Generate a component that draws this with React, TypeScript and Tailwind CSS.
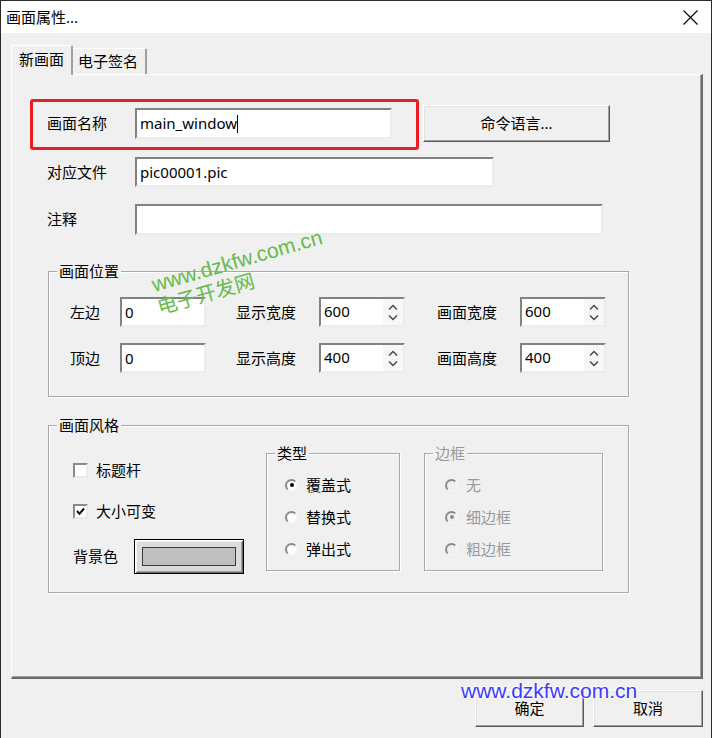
import React from "react";

function Edit({ w, h, value, caret }: { w: string; h: string; value?: string; caret?: boolean }) {
  return (
    <div
      className={`${w} ${h} bg-white border-2 border-t-[#828282] border-l-[#828282] border-r-[#ececec] border-b-[#ececec] flex items-center pl-[3px] text-[15px] text-black leading-none`}
    >
      <span>{value}</span>
      {caret ? <span className="w-px h-[18px] bg-black" /> : null}
    </div>
  );
}

function Spin({ value }: { value: string }) {
  return (
    <div className="w-[86px] h-[30px] bg-white border-2 border-t-[#828282] border-l-[#828282] border-r-[#ececec] border-b-[#ececec] flex text-[15px] text-black">
      <div className="flex-1 flex items-center pl-[3px] leading-none pb-[2px]">{value}</div>
      <div className="w-[20px] h-full bg-[#f7f7f7] flex flex-col items-center justify-center gap-[5px]">
        <svg width="10" height="6" viewBox="0 0 10 6">
          <path d="M1 5.5 L5 1.5 L9 5.5" fill="none" stroke="#444" strokeWidth="1.4" />
        </svg>
        <svg width="10" height="6" viewBox="0 0 10 6">
          <path d="M1 0.5 L5 4.5 L9 0.5" fill="none" stroke="#444" strokeWidth="1.4" />
        </svg>
      </div>
    </div>
  );
}

function Button({ w, h, children }: { w: string; h: string; children: React.ReactNode }) {
  return (
    <div
      className={`${w} ${h} bg-[#f0f0f0] border border-t-white border-l-white border-r-[#5a5a5a] border-b-[#5a5a5a] shadow-[inset_-1px_-1px_0_#a0a0a0,inset_1px_1px_0_#e3e3e3] flex items-center justify-center text-[15px] text-black`}
    >
      {children}
    </div>
  );
}

function Legend({ children, gray }: { children: React.ReactNode; gray?: boolean }) {
  return (
    <span
      className={`absolute left-[8px] -top-[12px] px-[2px] bg-[#f0f0f0] leading-[22px] text-[15px] ${gray ? "text-[#9a9a9a]" : "text-black"}`}
    >
      {children}
    </span>
  );
}

function Radio({ label, checked, disabled }: { label: string; checked?: boolean; disabled?: boolean }) {
  return (
    <div className="h-[20px] flex items-center">
      <div
        className={`w-[13px] h-[13px] rounded-full border-2 border-t-[#8a8a8a] border-l-[#8a8a8a] border-r-[#f4f4f4] border-b-[#f4f4f4] flex items-center justify-center ${disabled ? "bg-[#f0f0f0]" : "bg-white"}`}
      >
        {checked ? <div className={`w-[4px] h-[4px] rounded-full ${disabled ? "bg-[#8a8a8a]" : "bg-black"}`} /> : null}
      </div>
      <span className={`ml-[8px] text-[15px] leading-none ${disabled ? "text-[#9a9a9a]" : "text-black"}`}>{label}</span>
    </div>
  );
}

function Check({ label, checked }: { label: string; checked?: boolean }) {
  return (
    <div className="h-[15px] flex items-center">
      <div className="w-[15px] h-[15px] bg-white border-2 border-t-[#8a8a8a] border-l-[#8a8a8a] border-r-[#eaeaea] border-b-[#eaeaea] flex items-center justify-center">
        {checked ? (
          <svg width="9" height="9" viewBox="0 0 9 9">
            <path d="M1 4 L3.5 6.8 L8 1.5" fill="none" stroke="#000" strokeWidth="2" />
          </svg>
        ) : null}
      </div>
      <span className="ml-[8px] text-[15px] leading-none text-black">{label}</span>
    </div>
  );
}

export default function App() {
  return (
    <div className="w-[712px] h-[738px] bg-[#f0f0f0] border-l border-r border-t border-[#2b2b2b] relative overflow-hidden flex flex-col font-['Noto_Sans','Noto_Sans_CJK_SC',sans-serif]">
      {/* title bar */}
      <div className="h-[32px] bg-white flex items-center justify-between pl-[5px] pr-[13px] shrink-0">
        <span className="text-[15px] text-black leading-none">画面属性...</span>
        <svg width="15" height="15" viewBox="0 0 15 15">
          <path d="M0.5 0.5 L14.5 14.5 M14.5 0.5 L0.5 14.5" stroke="#000" strokeWidth="1.1" />
        </svg>
      </div>

      <div className="flex flex-col pl-[10px] pt-[12px]">
        {/* tabs */}
        <div className="flex items-end h-[29px]">
          <div className="relative z-10 w-[62px] h-[30px] -mb-px bg-[#f0f0f0] border-t border-l border-white border-r-2 border-r-[#a0a0a0] rounded-t-[2px] flex items-center pl-[7px] pb-[2px] text-[15px] text-black leading-none">
            新画面
          </div>
          <div className="w-[74px] h-[26px] bg-[#f0f0f0] border-t border-white border-r-2 border-r-[#a0a0a0] rounded-t-[2px] flex items-center pl-[5px] text-[15px] text-black leading-none">
            电子签名
          </div>
        </div>

        {/* panel */}
        <div className="w-[692px] h-[605px] border-t border-l border-white border-r-2 border-b-2 border-r-[#6a6a6a] border-b-[#6a6a6a] shadow-[inset_-1px_-1px_0_#a0a0a0] flex flex-col">
          <div className="mt-[30px] pl-[35px] flex items-center">
            <span className="w-[88px] text-[15px] text-black">画面名称</span>
            <Edit w="w-[257px]" h="h-[31px]" value="main_window" caret />
            <div className="ml-[31px]">
              <Button w="w-[187px]" h="h-[37px]">命令语言...</Button>
            </div>
          </div>
          <div className="mt-[15px] pl-[35px] flex items-center">
            <span className="w-[88px] text-[15px] text-black">对应文件</span>
            <Edit w="w-[359px]" h="h-[30px]" value="pic00001.pic" />
          </div>
          <div className="mt-[17px] pl-[35px] flex items-center">
            <span className="w-[88px] text-[15px] text-black">注释</span>
            <Edit w="w-[468px]" h="h-[31px]" />
          </div>

          {/* 画面位置 */}
          <div className="mt-[36px] ml-[36px] w-[581px] h-[126px] relative border border-[#a8a8a8] shadow-[1px_1px_0_#fff,inset_1px_1px_0_#fff] pt-[25px] pl-[21px] flex flex-col gap-[16px]">
            <Legend>画面位置</Legend>
            <div className="flex items-center h-[30px]">
              <span className="w-[50px] text-[15px] text-black">左边</span>
              <Edit w="w-[86px]" h="h-[30px]" value="0" />
              <span className="ml-[30px] w-[83px] text-[15px] text-black">显示宽度</span>
              <Spin value="600" />
              <span className="ml-[32px] w-[83px] text-[15px] text-black">画面宽度</span>
              <Spin value="600" />
            </div>
            <div className="flex items-center h-[30px]">
              <span className="w-[50px] text-[15px] text-black">顶边</span>
              <Edit w="w-[86px]" h="h-[30px]" value="0" />
              <span className="ml-[30px] w-[83px] text-[15px] text-black">显示高度</span>
              <Spin value="400" />
              <span className="ml-[32px] w-[83px] text-[15px] text-black">画面高度</span>
              <Spin value="400" />
            </div>
          </div>

          {/* 画面风格 */}
          <div className="mt-[28px] ml-[36px] w-[581px] h-[168px] relative border border-[#a8a8a8] shadow-[1px_1px_0_#fff,inset_1px_1px_0_#fff] flex items-start">
            <Legend>画面风格</Legend>
            <div className="w-[217px] pl-[24px] pt-[37px] flex flex-col">
              <Check label="标题杆" />
              <div className="mt-[26px]">
                <Check label="大小可变" checked />
              </div>
              <div className="mt-[20px] flex items-center">
                <span className="w-[61px] text-[15px] text-black">背景色</span>
                <div className="w-[110px] h-[35px] border border-black bg-[#dcdcdc] shadow-[inset_1px_1px_0_#fff,inset_-1px_-1px_0_#6a6a6a,inset_2px_2px_0_#f4f4f4,inset_-2px_-2px_0_#a0a0a0] flex items-center justify-center">
                  <div className="w-[94px] h-[19px] border border-[#3a3a3a] bg-[#c0c0c0]" />
                </div>
              </div>
            </div>
            <div className="mt-[27px] w-[134px] h-[118px] relative border border-[#a8a8a8] shadow-[1px_1px_0_#fff,inset_1px_1px_0_#fff] pl-[18px] pt-[21px] flex flex-col gap-[12px]">
              <Legend>类型</Legend>
              <Radio label="覆盖式" checked />
              <Radio label="替换式" />
              <Radio label="弹出式" />
            </div>
            <div className="mt-[27px] ml-[24px] w-[179px] h-[118px] relative border border-[#a8a8a8] shadow-[1px_1px_0_#fff,inset_1px_1px_0_#fff] pl-[20px] pt-[21px] flex flex-col gap-[12px]">
              <Legend gray>边框</Legend>
              <Radio label="无" disabled />
              <Radio label="细边框" checked disabled />
              <Radio label="粗边框" disabled />
            </div>
          </div>
        </div>

        {/* bottom buttons */}
        <div className="w-[692px] mt-[11px] flex justify-end gap-[9px]">
          <Button w="w-[109px]" h="h-[37px]">确定</Button>
          <Button w="w-[110px]" h="h-[37px]">取消</Button>
        </div>
      </div>

      {/* annotation: red box */}
      <div className="absolute left-[29px] top-[98px] w-[389px] h-[51px] border-[3px] border-[#ec1c24] rounded-[3px]" />

      {/* watermarks */}
      <span className="absolute left-[136px] top-[248px] w-[200px] text-center text-[21px] leading-[24px] text-[#66bb4a] font-['Liberation_Sans',Arial,sans-serif] -rotate-[16deg] whitespace-nowrap">
        www.dzkfw.com.cn
      </span>
      <span className="absolute left-[153px] top-[281px] w-[104px] text-center text-[20px] leading-[24px] text-[#66bb4a] -rotate-[16deg] whitespace-nowrap">
        电子开发网
      </span>
      <span className="absolute left-[460px] top-[678px] text-[21px] leading-[24px] text-[#3b3bff] font-['Liberation_Sans',Arial,sans-serif] whitespace-nowrap [text-shadow:0_0_2px_#fff,0_0_2px_#fff,0_0_3px_#fff]">
        www.dzkfw.com.cn
      </span>
    </div>
  );
}
